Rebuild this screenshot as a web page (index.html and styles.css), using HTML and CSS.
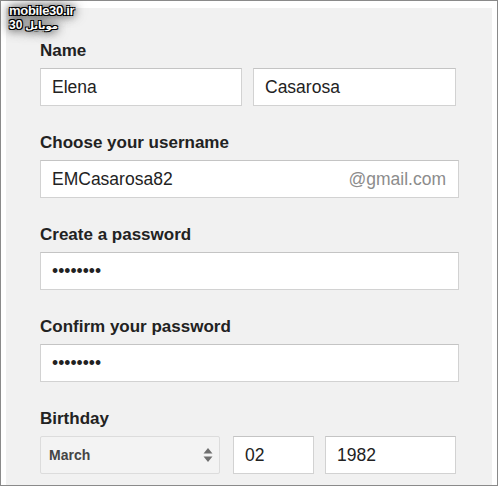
FILE: index.html
```html
<!DOCTYPE html>
<html>
<head>
<meta charset="utf-8">
<link rel="stylesheet" href="styles.css">
</head>
<body>
<div class="frame">
  <div class="panel">
    <div class="field">
      <div class="label">Name</div>
      <div class="row name-row">
        <div class="input w-first">Elena</div>
        <div class="input w-last">Casarosa</div>
      </div>
    </div>
    <div class="field">
      <div class="label">Choose your username</div>
      <div class="input wide user">
        <span>EMCasarosa82</span>
        <span class="domain">@gmail.com</span>
      </div>
    </div>
    <div class="field">
      <div class="label">Create a password</div>
      <div class="input wide dots">••••••••</div>
    </div>
    <div class="field">
      <div class="label">Confirm your password</div>
      <div class="input wide dots">••••••••</div>
    </div>
    <div class="field">
      <div class="label">Birthday</div>
      <div class="row bday-row">
        <div class="select">
          <span>March</span>
          <svg class="arrows" width="10" height="16" viewBox="0 0 10 16">
            <path d="M5 1 L9.5 6.5 L0.5 6.5 Z" fill="#6f6f6f"/>
            <path d="M5 15 L9.5 9.5 L0.5 9.5 Z" fill="#6f6f6f"/>
          </svg>
        </div>
        <div class="input day">02</div>
        <div class="input year">1982</div>
      </div>
    </div>
  </div>
  <div class="watermark">
    <div class="wm1">mobile30.ir</div>
    <div class="wm2"><span class="num">30</span> <span class="fa">موبایل</span></div>
  </div>
</div>
</body>
</html>
```
FILE: styles.css
```css
* { box-sizing: border-box; }
html, body { margin: 0; padding: 0; background: #fff; }
body {
  width: 500px;
  height: 487px;
  overflow: hidden;
  font-family: "Liberation Sans", Arial, sans-serif;
}
.frame {
  position: relative;
  width: 498px;
  height: 486px;
  border: 1px solid #8a8a8a;
  padding: 7px 5px 0 5px;
  background: #fff;
  display: flex;
}
.panel {
  flex: 1;
  background: #f1f1f1;
  padding: 33px 0 0 34px;
  display: flex;
  flex-direction: column;
  gap: 27px;
}
.field {
  display: flex;
  flex-direction: column;
  gap: 7px;
}
.label {
  font-size: 17px;
  line-height: 20px;
  font-weight: bold;
  color: #222;
}
.row { display: flex; }
.name-row { gap: 11px; }
.bday-row { gap: 11px; }
.input {
  height: 38px;
  background: #fff;
  border: 1px solid #d2d2d2;
  border-top-color: #c4c4c4;
  padding: 0 12px 0 11px;
  display: flex;
  align-items: center;
  font-size: 17.5px;
  color: #222;
}
.w-first { width: 202px; }
.w-last { width: 203px; }
.wide { width: 419px; }
.user { justify-content: space-between; }
.domain { color: #8c8c8c; }
.dots { font-size: 17.5px; }
.select {
  width: 180px;
  height: 38px;
  margin-right: 2px;
  background: #f3f3f3;
  border: 1px solid #dcdcdc;
  border-radius: 2px;
  padding: 0 6px 0 8px;
  display: flex;
  align-items: center;
  justify-content: space-between;
  font-size: 14px;
  font-weight: bold;
  color: #444;
}
.arrows { display: block; }
.day { width: 81px; }
.year { width: 131px; }
.watermark {
  position: absolute;
  left: 8px;
  top: 2px;
  font-family: "Liberation Sans", Arial, sans-serif;
  font-weight: bold;
  font-size: 13px;
  line-height: 15px;
  color: #fff;
  text-shadow: 0 0 1px #000, 1px 1px 0 #000, -1px -1px 0 #000, 1px -1px 0 #000, -1px 1px 0 #000, 0 0 8px #000, 0 0 14px #000;
}
.wm1 { letter-spacing: -0.3px; }
.wm2 { display: flex; gap: 3px; font-size: 12px; }
.fa { font-family: "DejaVu Sans", "Noto Sans", sans-serif; font-size: 10px; }
```
